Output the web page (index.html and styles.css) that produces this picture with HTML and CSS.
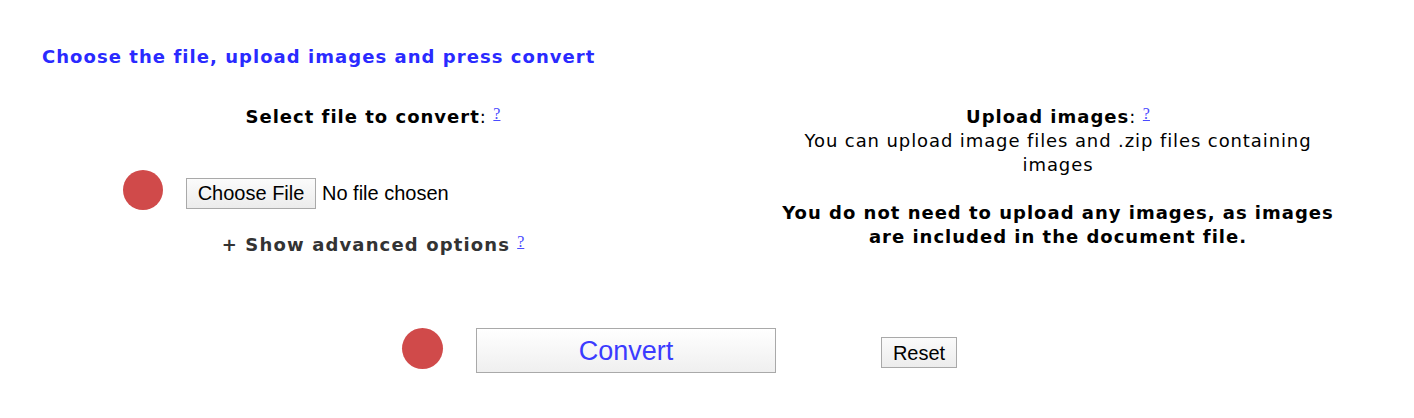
FILE: index.html
```html
<!DOCTYPE html>
<html>
<head>
<meta charset="utf-8">
<link rel="stylesheet" href="styles.css">
</head>
<body>
<div class="page">
  <h1 class="title">Choose the file, upload images and press convert</h1>
  <div class="panels">
    <div class="col-left">
      <div class="label"><b>Select file to convert</b>: <sup><a href="#" class="help">?</a></sup></div>
      <div class="file-row">
        <span class="dot"></span>
        <span class="btn btn-file">Choose File</span>
        <span class="file-name">No file chosen</span>
      </div>
      <div class="advanced"><b>+ Show advanced options</b><sup><a href="#" class="help">?</a></sup></div>
    </div>
    <div class="col-right">
      <div class="label"><b>Upload images</b>: <sup><a href="#" class="help">?</a></sup></div>
      <div class="desc">You can upload image files and .zip files containing images</div>
      <div class="note"><b>You do not need to upload any images, as images are included in the document file.</b></div>
    </div>
  </div>
  <div class="actions">
    <span class="dot dot-lg"></span>
    <span class="btn btn-convert">Convert</span>
    <span class="btn btn-reset">Reset</span>
  </div>
</div>
</body>
</html>
```
FILE: styles.css
```css
html, body {
  margin: 0;
  padding: 0;
  background: #ffffff;
}
body {
  font-family: "DejaVu Sans", Verdana, sans-serif;
  font-size: 18px;
  line-height: 24px;
  letter-spacing: 0.9px;
  color: #000;
}
b {
  font-weight: bold;
  letter-spacing: 1px;
}
.page {
  padding: 45px 0 0 42px;
}
.title {
  margin: 0;
  font-size: 18px;
  line-height: 24px;
  font-weight: bold;
  letter-spacing: 1.05px;
  color: #2a2aff;
}
.panels {
  display: grid;
  grid-template-columns: 662px 566px;
  column-gap: 71px;
  margin-top: 36px;
}
.col-left, .col-right {
  text-align: center;
}
sup {
  vertical-align: top;
  line-height: 1;
  position: relative;
  top: 1px;
}
.help {
  font-family: "Liberation Serif", serif;
  font-size: 16px;
  letter-spacing: 0;
  color: #4a4aff;
  text-decoration: underline;
}
.advanced .help {
  margin-left: 7px;
}
.file-row {
  display: flex;
  align-items: center;
  margin-top: 41px;
  padding-left: 81px;
  height: 40px;
}
.dot {
  display: inline-block;
  width: 40px;
  height: 40px;
  border-radius: 50%;
  background: #d04a4a;
  flex: none;
}
.btn {
  display: inline-flex;
  align-items: center;
  justify-content: center;
  box-sizing: border-box;
  font-family: "Liberation Sans", Arial, sans-serif;
  letter-spacing: 0;
  border: 1px solid #a9a9a9;
  background: linear-gradient(#fbfbfb, #ececec);
  color: #000;
  flex: none;
}
.btn-file {
  margin-left: 23px;
  width: 130px;
  height: 31px;
  font-size: 20px;
  position: relative;
  top: 3px;
}
.file-name {
  font-family: "Liberation Sans", Arial, sans-serif;
  letter-spacing: 0;
  font-size: 20px;
  margin-left: 6px;
  position: relative;
  top: 3px;
}
.advanced {
  margin-top: 23px;
  color: #333;
}
.advanced b {
  letter-spacing: 1.15px;
}
.note {
  margin-top: 24px;
}
.actions {
  display: flex;
  align-items: center;
  margin-top: 69px;
  padding-left: 360px;
  padding-bottom: 20px;
}
.dot-lg {
  width: 41px;
  height: 41px;
}
.btn-convert {
  margin-left: 33px;
  width: 300px;
  height: 45px;
  font-size: 27px;
  color: #3b3bff;
  background: linear-gradient(#ffffff, #efefef);
  position: relative;
  top: 2px;
}
.btn-reset {
  margin-left: 105px;
  width: 76px;
  height: 31px;
  font-size: 20px;
  position: relative;
  top: 4px;
}
```
